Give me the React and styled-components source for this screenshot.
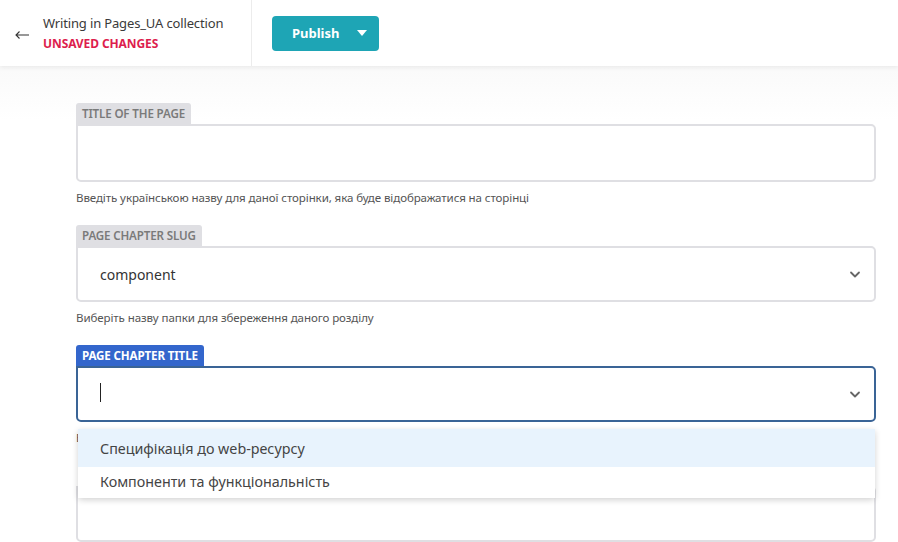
import React from 'react';
import styled, { createGlobalStyle } from 'styled-components';

const GlobalStyle = createGlobalStyle`
  html, body {
    margin: 0;
    padding: 0;
    background: #ffffff;
    font-family: "Noto Sans", "Open Sans", sans-serif;
    overflow: hidden;
  }
`;

const Page = styled.div`
  width: 898px;
  height: 542px;
  overflow: hidden;
  background: linear-gradient(#efefef 0px, #f7f7f7 40px, #ffffff 120px);
`;

const Header = styled.header`
  height: 66px;
  background: #fff;
  display: flex;
  align-items: stretch;
  box-shadow: 0 2px 4px rgba(0, 0, 0, 0.06);
  position: relative;
  z-index: 2;
`;

const BackSide = styled.div`
  width: 251px;
  display: flex;
  align-items: center;
  border-right: 1px solid #ececec;
`;

const BackButton = styled.button`
  border: 0;
  background: none;
  padding: 0;
  width: 43px;
  height: 40px;
  display: flex;
  align-items: center;
  justify-content: center;
  color: #333;
  cursor: pointer;
  margin-top: 4px;
`;

const TitleBlock = styled.div`
  display: flex;
  flex-direction: column;
  gap: 3px;
`;

const CollectionName = styled.div`
  font-size: 13px;
  color: #3a3a3a;
  letter-spacing: -0.15px;
`;

const Unsaved = styled.div`
  font-size: 12px;
  font-weight: 700;
  color: #dd1d4d;
  letter-spacing: -0.1px;
`;

const Actions = styled.div`
  display: flex;
  align-items: center;
  padding-left: 20px;
`;

const PublishButton = styled.button`
  width: 107px;
  height: 35px;
  border: 0;
  border-radius: 4px;
  background: #1ea5b5;
  color: #fff;
  font-family: inherit;
  font-size: 13px;
  font-weight: 700;
  display: flex;
  align-items: center;
  padding: 0 12px 0 20px;
  justify-content: space-between;
  cursor: pointer;
`;

const Caret = styled.span`
  width: 0;
  height: 0;
  border-left: 5px solid transparent;
  border-right: 5px solid transparent;
  border-top: 6px solid #fff;
`;

const Form = styled.main`
  padding: 37px 22px 0 76px;
  display: flex;
  flex-direction: column;
`;

const Field = styled.div`
  display: flex;
  flex-direction: column;
  margin-bottom: ${(p) => p.$gap || 0}px;
  padding-top: ${(p) => p.$top || 0}px;
  position: relative;
`;

const Label = styled.label`
  align-self: flex-start;
  height: 21px;
  padding: 0 6px;
  display: flex;
  align-items: center;
  font-size: 11.6px;
  font-weight: ${(p) => (p.$active ? 700 : 600)};
  text-transform: uppercase;
  letter-spacing: -0.15px;
  border-radius: 3px 3px 0 0;
  background: ${(p) => (p.$active ? '#3366cc' : '#dfdfe3')};
  color: ${(p) => (p.$active ? '#ffffff' : '#7a7a7a')};
`;

const Box = styled.div`
  height: ${(p) => p.$h || 58}px;
  box-sizing: border-box;
  border: 2px solid ${(p) => (p.$active ? '#3a6496' : '#dfdfe3')};
  border-radius: 0 5px 5px 5px;
  background: #fff;
  display: flex;
  align-items: center;
  padding: 0 12px 0 22px;
  font-size: 14px;
  color: #333;
`;

const Value = styled.span`
  flex: 1;
`;

const Cursor = styled.span`
  display: inline-block;
  width: 1px;
  height: 19px;
  background: #222;
`;

const Help = styled.p`
  margin: 8px 0 0;
  font-size: 11.55px;
  color: #555;
  letter-spacing: -0.1px;
`;

const Menu = styled.ul`
  position: absolute;
  top: 84px;
  left: 2px;
  right: 1px;
  margin: 0;
  padding: 0;
  list-style: none;
  background: #fff;
  border-radius: 0 0 4px 4px;
  box-shadow: 0 2px 6px rgba(0, 0, 0, 0.18);
  z-index: 3;
`;

const Option = styled.li`
  box-sizing: border-box;
  height: ${(p) => (p.$selected ? 38 : 31)}px;
  display: flex;
  align-items: center;
  padding: 0 0 ${(p) => (p.$selected ? 0 : 3)}px 22px;
  font-size: 14.3px;
  color: #444;
  background: ${(p) => (p.$selected ? '#e8f3fd' : '#fff')};
`;

const Chevron = () => (
  <svg width="14" height="14" viewBox="0 0 14 14" fill="none">
    <path d="M3 5.5l4 4 4-4" stroke="#666" strokeWidth="1.8" strokeLinecap="round" strokeLinejoin="round" />
  </svg>
);

const BackArrow = () => (
  <svg width="16" height="10" viewBox="0 0 16 10" fill="none">
    <path d="M15 5H2M5.5 1.5L2 5l3.5 3.5" stroke="#333" strokeWidth="1.1" />
  </svg>
);

export default function App() {
  return (
    <Page>
      <GlobalStyle />
      <Header>
        <BackSide>
          <BackButton aria-label="back">
            <BackArrow />
          </BackButton>
          <TitleBlock>
            <CollectionName>Writing in Pages_UA collection</CollectionName>
            <Unsaved>UNSAVED CHANGES</Unsaved>
          </TitleBlock>
        </BackSide>
        <Actions>
          <PublishButton>
            Publish
            <Caret />
          </PublishButton>
        </Actions>
      </Header>

      <Form>
        <Field $gap={20}>
          <Label>Title of the page</Label>
          <Box />
          <Help>Введіть українською назву для даної сторінки, яка буде відображатися на сторінці</Help>
        </Field>

        <Field $gap={20}>
          <Label>Page chapter slug</Label>
          <Box $h={56}>
            <Value>component</Value>
            <Chevron />
          </Box>
          <Help>Виберіть назву папки для збереження даного розділу</Help>
        </Field>

        <Field $gap={20}>
          <Label $active>Page chapter title</Label>
          <Box $h={56} $active>
            <Value>
              <Cursor />
            </Value>
            <Chevron />
          </Box>
          <Help>Виберіть назву розділу</Help>
          <Menu>
            <Option $selected>Специфікація до web-ресурсу</Option>
            <Option>Компоненти та функціональність</Option>
          </Menu>
        </Field>

        <Field $top={21}>
          <Box $h={56} />
        </Field>
      </Form>
    </Page>
  );
}
